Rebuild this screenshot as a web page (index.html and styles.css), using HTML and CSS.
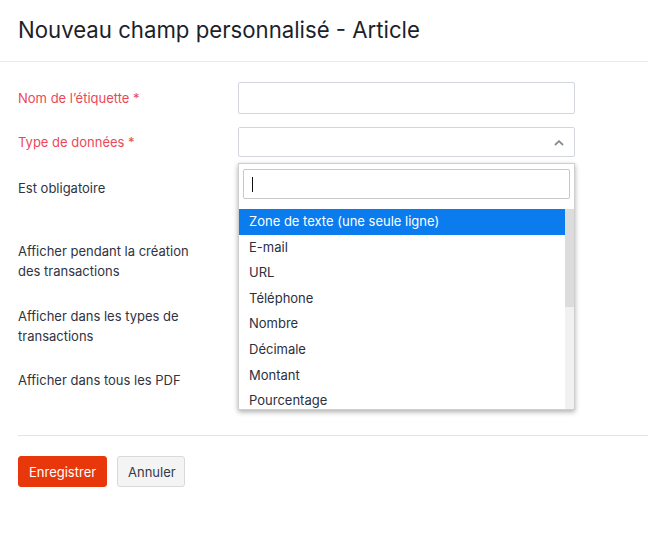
FILE: index.html
```html
<!DOCTYPE html>
<html lang="fr">
<head>
<meta charset="utf-8">
<link rel="stylesheet" href="styles.css">
</head>
<body>
<div class="modal">
  <header class="modal-header">
    <h1 class="title">Nouveau champ personnalisé - Article</h1>
  </header>
  <form class="form">
    <div class="row row-input">
      <label class="label required">Nom de l’étiquette *</label>
      <div class="field"><input class="input" type="text"></div>
    </div>
    <div class="row row-select">
      <label class="label required">Type de données *</label>
      <div class="field">
        <div class="select">
          <svg class="caret" width="10" height="6" viewBox="0 0 10 6"><path d="M1 5 L5 1.2 L9 5" fill="none" stroke="#8a8a8a" stroke-width="1.8"/></svg>
        </div>
        <div class="dropdown">
          <div class="search"><span class="cursor"></span></div>
          <div class="list-wrap">
            <ul class="list">
              <li class="opt active">Zone de texte (une seule ligne)</li>
              <li class="opt">E-mail</li>
              <li class="opt">URL</li>
              <li class="opt">Téléphone</li>
              <li class="opt">Nombre</li>
              <li class="opt">Décimale</li>
              <li class="opt">Montant</li>
              <li class="opt">Pourcentage</li>
            </ul>
            <div class="scrollbar"><div class="thumb"></div></div>
          </div>
        </div>
      </div>
    </div>
    <div class="row row-check r3">
      <label class="label">Est obligatoire</label>
    </div>
    <div class="row row-check r4">
      <label class="label">Afficher pendant la création<br>des transactions</label>
    </div>
    <div class="row row-check r5">
      <label class="label">Afficher dans les types de<br>transactions</label>
    </div>
    <div class="row row-check r6">
      <label class="label">Afficher dans tous les PDF</label>
    </div>
    <div class="footer">
      <button type="button" class="btn btn-primary">Enregistrer</button>
      <button type="button" class="btn btn-default">Annuler</button>
    </div>
  </form>
</div>
</body>
</html>
```

FILE: styles.css
```css
* { box-sizing: border-box; }
html, body { margin: 0; padding: 0; background: #fff; }
body {
  font-family: Inter, "Noto Sans", "Liberation Sans", sans-serif;
  font-size: 13px;
  color: #21263c;
}
.modal { width: 648px; }
.modal-header {
  height: 62px;
  border-bottom: 1px solid #ebebeb;
  padding: 0 18px;
  display: flex;
  align-items: center;
}
.title {
  margin: 0;
  font-size: 22.2px;
  font-weight: 400;
  color: #1d1f2b;
  letter-spacing: 0;
  padding-bottom: 3px;
}
.form { padding: 20px 0 0 18px; }
.row {
  display: flex;
  align-items: center;
}
.label {
  width: 220px;
  flex: none;
  line-height: 20px;
  color: #2f3342;
}
.label.required { color: #ec4858; }
.field { width: 337px; position: relative; }
.row-input { height: 32px; margin-bottom: 13px; }
.row-select { height: 30px; }
.input {
  display: block;
  width: 100%;
  height: 32px;
  border: 1px solid #d2d6dc;
  border-radius: 2px;
  font: inherit;
  outline: none;
}
.select {
  height: 30px;
  border: 1px solid #d2d6dc;
  border-radius: 2px;
  position: relative;
}
.caret { position: absolute; right: 10px; top: 12px; }
.dropdown {
  position: absolute;
  left: 0;
  top: 36px;
  width: 337px;
  height: 247px;
  background: #fff;
  border: 1px solid #cfcfcf;
  box-shadow: 0 2px 5px rgba(0,0,0,0.32);
  z-index: 5;
  display: flex;
  flex-direction: column;
}
.search {
  margin: 5px 4px 0 4px;
  height: 30px;
  border: 1px solid #c8c8c8;
  border-radius: 2px;
  padding: 7px 0 0 8px;
}
.cursor { display: block; width: 1px; height: 15px; background: #111; }
.list-wrap {
  margin-top: 10px;
  flex: 1;
  display: flex;
  overflow: hidden;
}
.list {
  list-style: none;
  margin: 0;
  padding: 0;
  flex: 1;
}
.opt {
  height: 25.6px;
  line-height: 25.6px;
  padding-left: 10px;
  color: #2c2f3e;
  white-space: nowrap;
}
.opt.active { background: #0a7cee; color: #fff; }
.scrollbar { width: 9px; background: #f1f1f1; flex: none; }
.thumb { height: 98px; background: #dcdcdc; }
.r3 { margin-top: 21px; height: 20px; }
.r4 { margin-top: 43px; height: 40px; }
.r5 { margin-top: 25px; height: 40px; }
.r6 { margin-top: 24px; height: 20px; }
.footer {
  margin-top: 45px;
  border-top: 1px solid #e3e3e3;
  padding-top: 20px;
  display: flex;
  gap: 10px;
}
.btn {
  height: 31px;
  border-radius: 3px;
  font: inherit;
  font-size: 13px;
  padding: 0 10px;
  cursor: pointer;
}
.btn-primary { background: #e8380b; color: #fff; border: 1px solid #e8380b; width: 89px; }
.btn-default { background: #f4f4f4; color: #333a4a; border: 1px solid #d9d9d9; width: 68px; }
```
